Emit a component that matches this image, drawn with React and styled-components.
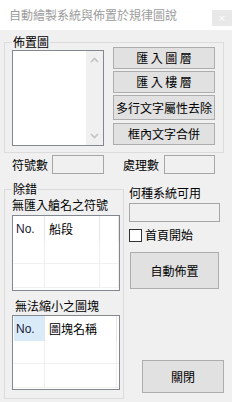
import React from 'react';
import styled, { createGlobalStyle } from 'styled-components';

const GlobalStyle = createGlobalStyle`
  html, body {
    margin: 0;
    padding: 0;
    background: #f0f0f0;
  }
  body {
    font-family: "Noto Sans CJK TC", "Liberation Sans", sans-serif;
    font-size: 12px;
    color: #000;
  }
`;

const Window = styled.div`
  width: 232px;
  height: 402px;
  background: #f0f0f0;
  display: flex;
  flex-direction: column;
  overflow: hidden;
`;

const TitleBar = styled.div`
  height: 30px;
  flex: none;
  background: #fff;
  display: flex;
  align-items: flex-start;
  justify-content: space-between;
  padding-left: 9px;
  box-sizing: border-box;
`;

const Title = styled.span`
  color: #9c9c9c;
  line-height: 14px;
  margin-top: 8px;
`;

const CloseBox = styled.div`
  width: 20px;
  height: 16px;
  margin-top: 10px;
  background: #e8e8e8;
  color: #fff;
  font-family: "Liberation Sans", sans-serif;
  font-size: 11px;
  display: flex;
  align-items: center;
  justify-content: center;
`;

const Body = styled.div`
  padding-left: 4px;
  display: flex;
  flex-direction: column;
`;

const Group = styled.div`
  position: relative;
  box-sizing: border-box;
  border: 1px solid #dcdcdc;
  width: ${(p) => p.w}px;
  height: ${(p) => p.h}px;
`;

const Legend = styled.span`
  position: absolute;
  top: -8px;
  left: 7px;
  padding: 0 1px;
  background: #f0f0f0;
  line-height: 14px;
`;

const TopGroup = styled(Group)`
  margin-top: 12px;
  display: flex;
  align-items: flex-start;
  padding: 4px 0 0 7px;
`;

const ListBox = styled.div`
  box-sizing: border-box;
  margin-top: 3px;
  width: 92px;
  height: 96px;
  border: 1px solid #828790;
  background: #fff;
  display: flex;
  justify-content: flex-end;
`;

const ScrollTrack = styled.div`
  width: 17px;
  background: #f0f0f0;
  display: flex;
  flex-direction: column;
  justify-content: space-between;
  align-items: center;
  padding: 6px 0;
`;

const ButtonCol = styled.div`
  margin-left: 9px;
  width: 102px;
  display: flex;
  flex-direction: column;
  gap: 2px;
`;

const Button = styled.button`
  box-sizing: border-box;
  width: ${(p) => p.w || 102}px;
  height: ${(p) => p.h || 22}px;
  margin: 0;
  padding: 0;
  background: #e1e1e1;
  border: 1px solid #adadad;
  font-family: "Noto Sans CJK TC", sans-serif;
  font-size: 12px;
  line-height: 14px;
  color: #000;
  letter-spacing: ${(p) => p.spread || 0}px;
  text-indent: ${(p) => p.spread || 0}px;
`;

const FieldRow = styled.div`
  display: flex;
  align-items: center;
  margin-top: 2px;
  padding-left: 8px;
`;

const Label = styled.span`
  line-height: 14px;
  white-space: nowrap;
`;

const TextBox = styled.div`
  box-sizing: border-box;
  width: ${(p) => p.w}px;
  height: 19px;
  border: 1px solid #a6a6a6;
  background: #f0f0f0;
  margin-left: ${(p) => p.ml || 0}px;
  margin-right: ${(p) => p.mr || 0}px;
`;

const Lower = styled.div`
  display: flex;
  margin-top: 15px;
`;

const DebugGroup = styled(Group)`
  display: flex;
  flex-direction: column;
  padding: 7px 0 0 7px;
`;

const SubLabel = styled(Label)`
  margin-top: ${(p) => p.mt || 0}px;
  margin-left: ${(p) => p.ml || 0}px;
`;

const ListView = styled.div`
  box-sizing: border-box;
  width: 108px;
  height: ${(p) => p.h}px;
  margin-top: ${(p) => p.mt}px;
  border: 1px solid #828790;
  background: #fff;
  display: grid;
  grid-template-columns: ${(p) => p.cols};
  grid-template-rows: 25px 23px 24px;
  overflow: hidden;
`;

const HeadCell = styled.div`
  border-right: 1px solid #e5e5e5;
  background: ${(p) => (p.active ? '#d9ebf9' : '#fff')};
  margin: ${(p) => (p.active ? '0 0 0 1px' : '0')};
  display: flex;
  align-items: center;
  padding-left: ${(p) => p.pl || 4}px;
  line-height: 14px;
  font-family: ${(p) => (p.latin ? '"Liberation Sans", sans-serif' : 'inherit')};
  color: ${(p) => (p.latin ? '#1a1a3a' : '#000')};
`;

const Cell = styled.div`
  border-right: 1px solid #f0f0f0;
  border-bottom: 1px solid #f0f0f0;
`;

const RightCol = styled.div`
  margin-left: 5px;
  width: 95px;
  display: flex;
  flex-direction: column;
  align-items: flex-start;
`;

const CheckRow = styled.label`
  display: flex;
  align-items: center;
  margin-top: 6px;
  line-height: 14px;
`;

const CheckBox = styled.span`
  box-sizing: border-box;
  width: 13px;
  height: 13px;
  border: 1px solid #333;
  background: #fff;
  margin-right: 3px;
`;

const Chevron = ({ up }) => (
  <svg width="9" height="6" viewBox="0 0 9 6">
    <path
      d={up ? 'M1 5 L4.5 1.5 L8 5' : 'M1 1 L4.5 4.5 L8 1'}
      fill="none"
      stroke="#c2c2c2"
      strokeWidth="1.6"
    />
  </svg>
);

const GridBody = ({ heads, rows = 2 }) => (
  <>
    {heads}
    {Array.from({ length: rows * 3 }).map((_, i) => (
      <Cell key={i} />
    ))}
  </>
);

const App = () => (
  <Window>
    <GlobalStyle />
    <TitleBar>
      <Title>自動繪製系統與佈置於規律圖說</Title>
      <CloseBox>×</CloseBox>
    </TitleBar>
    <Body>
      <TopGroup w={220} h={111}>
        <Legend>佈置圖</Legend>
        <ListBox>
          <ScrollTrack>
            <Chevron up />
            <Chevron />
          </ScrollTrack>
        </ListBox>
        <ButtonCol>
          <Button spread={2.5}>匯入圖層</Button>
          <Button spread={2.5}>匯入樓層</Button>
          <Button h={25}>多行文字屬性去除</Button>
          <Button style={{ marginTop: 1 }}>框內文字合併</Button>
        </ButtonCol>
      </TopGroup>

      <FieldRow>
        <Label>符號數</Label>
        <TextBox w={52} ml={4} mr={19} />
        <Label>處理數</Label>
        <TextBox w={51} ml={5} />
      </FieldRow>

      <Lower>
        <DebugGroup w={120} h={210}>
          <Legend>除錯</Legend>
          <SubLabel mt={1}>無匯入艙名之符號</SubLabel>
          <ListView h={76} mt={3} cols="32px 55px 1fr">
            <GridBody
              heads={
                <>
                  <HeadCell latin pl={3}>No.</HeadCell>
                  <HeadCell>船段</HeadCell>
                  <HeadCell />
                </>
              }
            />
          </ListView>
          <SubLabel mt={8} ml={3}>無法縮小之圖塊</SubLabel>
          <ListView h={75} mt={2} cols="32px 72px 1fr">
            <GridBody
              heads={
                <>
                  <HeadCell latin active pl={2}>No.</HeadCell>
                  <HeadCell>圖塊名稱</HeadCell>
                  <HeadCell />
                </>
              }
            />
          </ListView>
        </DebugGroup>

        <RightCol>
          <Label style={{ marginTop: -3 }}>何種系統可用</Label>
          <TextBox w={91} style={{ marginTop: 3 }} />
          <CheckRow>
            <CheckBox />
            首頁開始
          </CheckRow>
          <Button w={89} h={37} style={{ marginTop: 10, marginLeft: 1 }}>
            自動佈置
          </Button>
          <Button w={82} h={33} style={{ marginTop: 71, marginLeft: 13 }}>
            關閉
          </Button>
        </RightCol>
      </Lower>
    </Body>
  </Window>
);

export default App;
